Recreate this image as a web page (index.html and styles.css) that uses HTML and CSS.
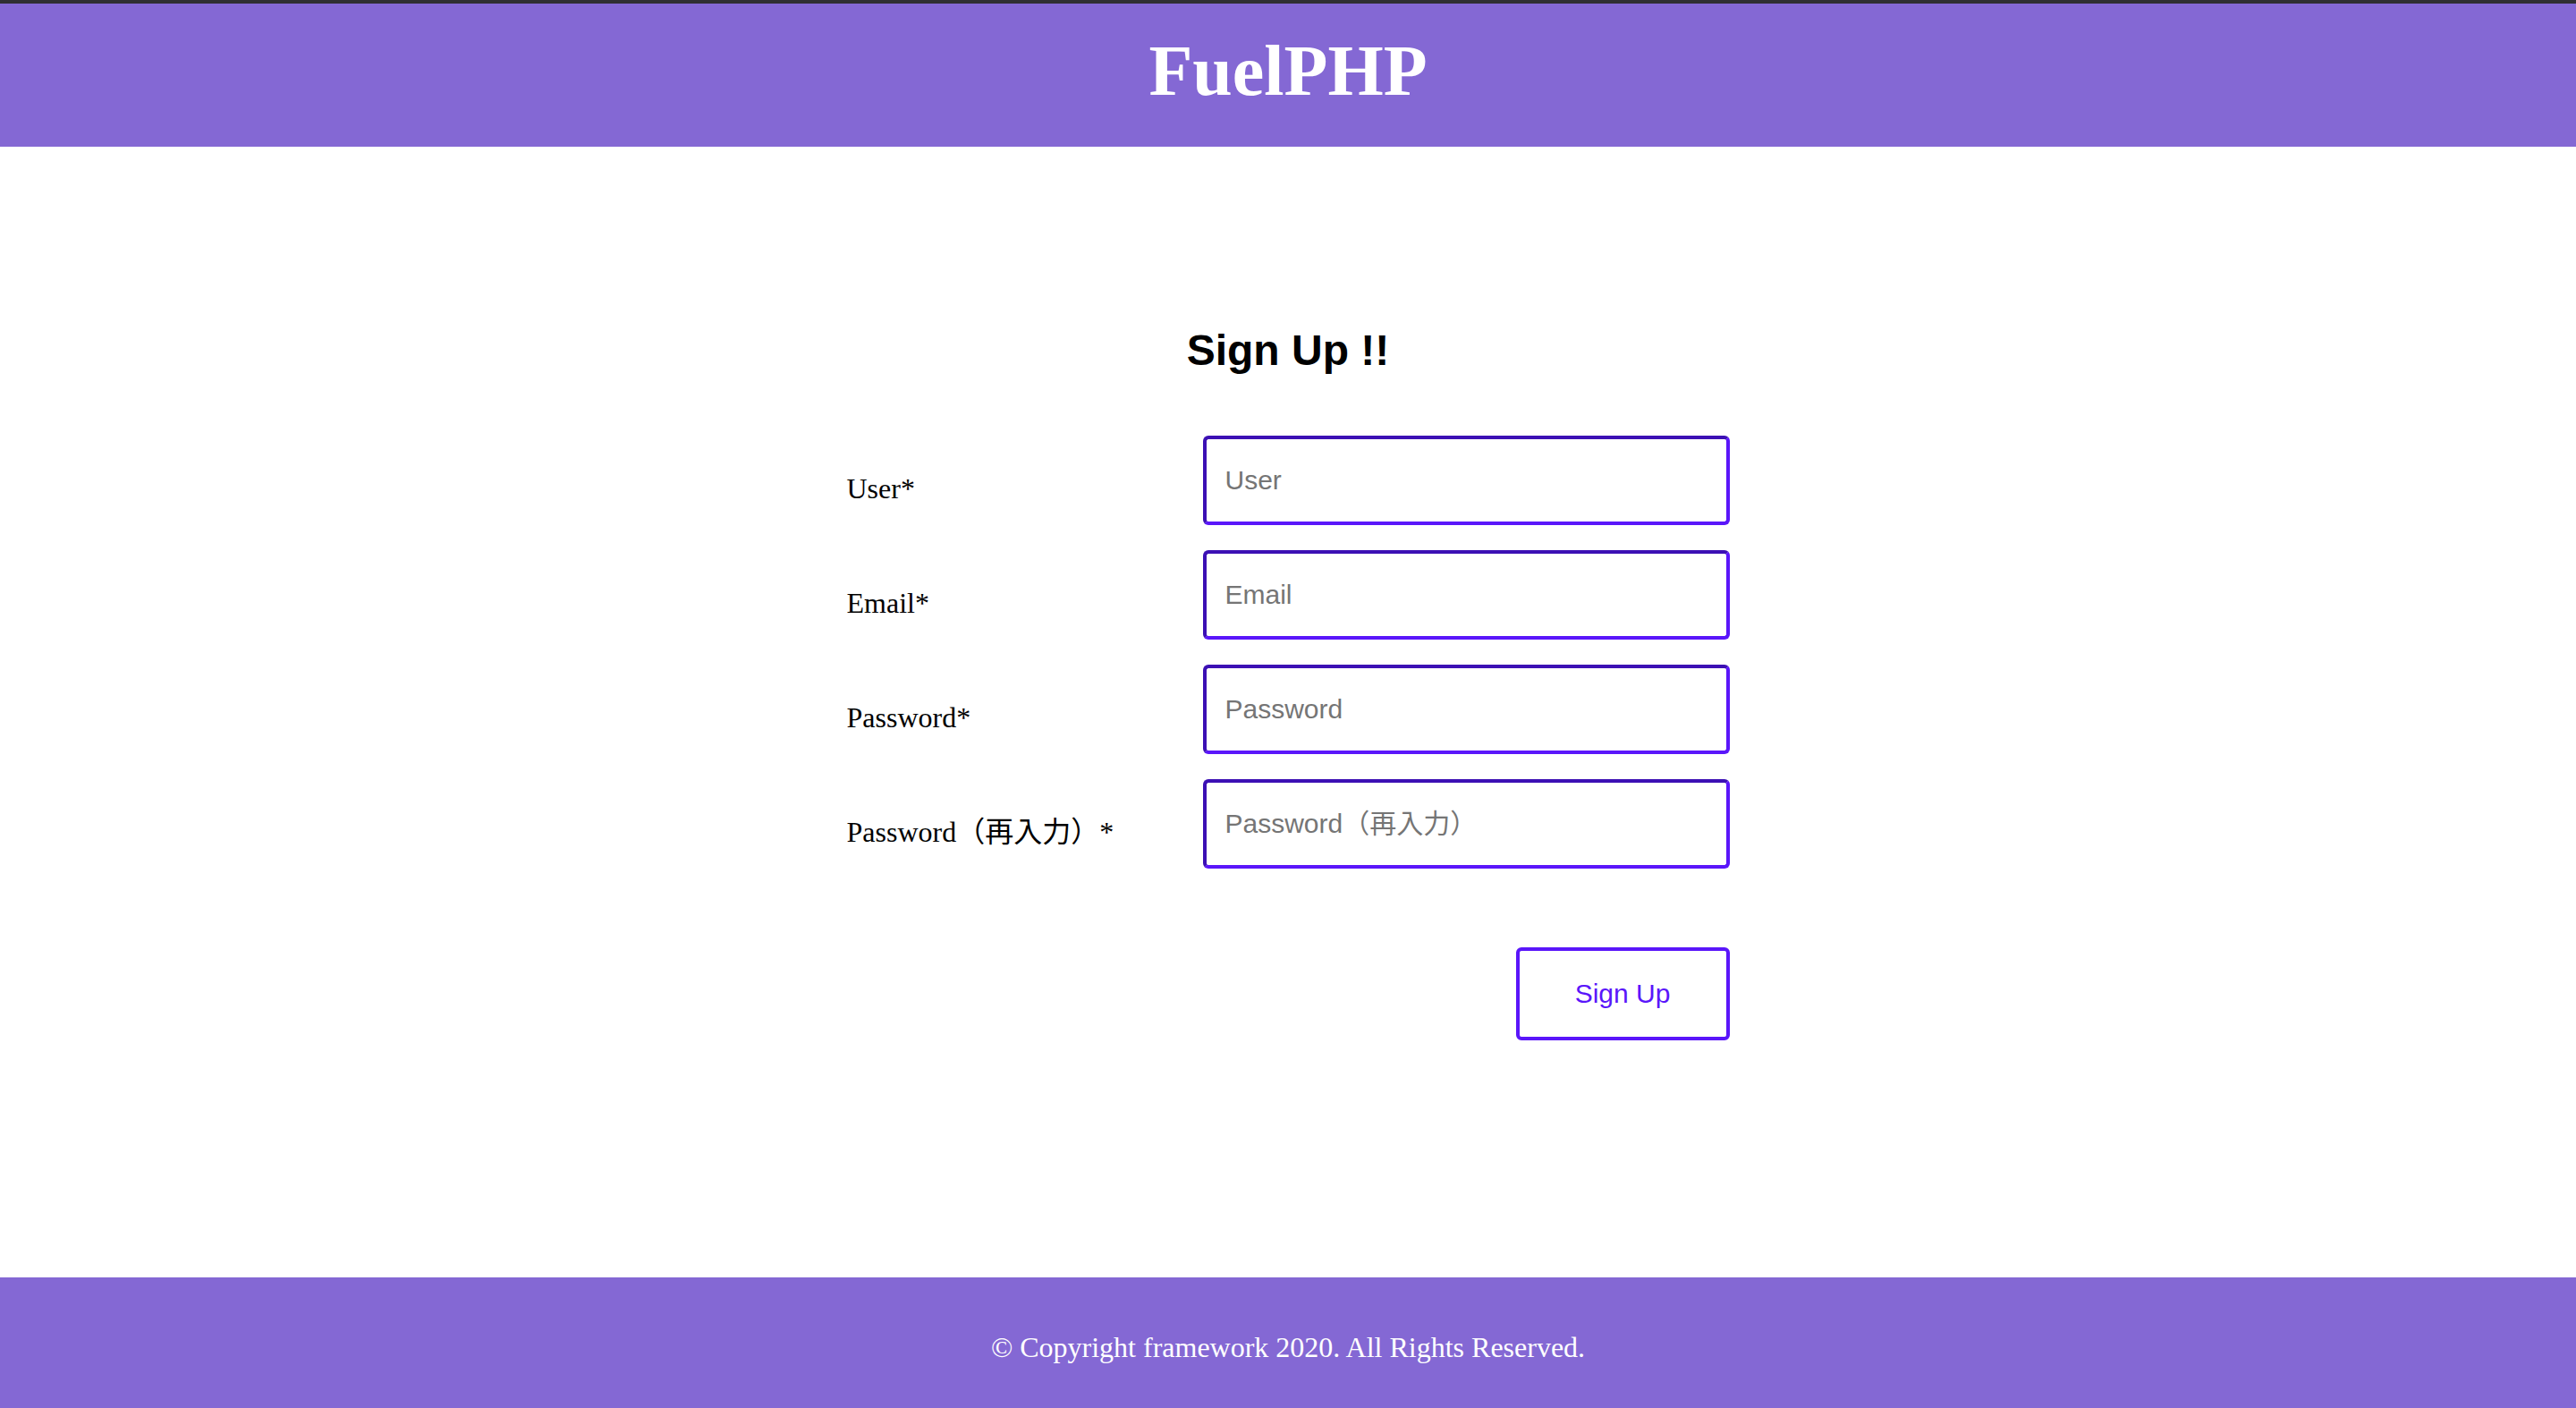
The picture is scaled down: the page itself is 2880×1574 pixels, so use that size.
FILE: index.html
```html
<!DOCTYPE html>
<html lang="ja">
<head>
<meta charset="utf-8">
<title>FuelPHP - Sign Up</title>
<link rel="stylesheet" href="styles.css">
</head>
<body>
<header class="site-header">
  <h1 class="logo">FuelPHP</h1>
</header>
<main class="content">
  <section class="signup">
    <h2 class="signup-title">Sign Up !!</h2>
    <form class="signup-form">
      <div class="field">
        <label class="field-label" for="user">User*</label>
        <input class="field-input" id="user" type="text" placeholder="User">
      </div>
      <div class="field">
        <label class="field-label" for="email">Email*</label>
        <input class="field-input" id="email" type="email" placeholder="Email">
      </div>
      <div class="field">
        <label class="field-label" for="password">Password*</label>
        <input class="field-input" id="password" type="password" placeholder="Password">
      </div>
      <div class="field">
        <label class="field-label" for="password2">Password（再入力）*</label>
        <input class="field-input" id="password2" type="password" placeholder="Password（再入力）">
      </div>
      <div class="actions">
        <button class="submit" type="submit">Sign Up</button>
      </div>
    </form>
  </section>
</main>
<footer class="site-footer">
  <p class="copyright">© Copyright framework 2020. All Rights Reserved.</p>
</footer>
</body>
</html>
```

FILE: styles.css
```css
html, body {
  margin: 0;
  padding: 0;
}

body {
  min-height: 100vh;
  display: flex;
  flex-direction: column;
  background: #ffffff;
  font-family: "Liberation Serif", "Noto Sans CJK JP", serif;
  color: #000000;
}

.site-header {
  background: #8468d4;
  border-top: 4px solid #2f2f33;
  height: 160px;
  box-sizing: content-box;
}

.logo {
  margin: 0;
  font-family: "Liberation Serif", serif;
  font-weight: bold;
  font-size: 80px;
  line-height: 150px;
  text-align: center;
  color: #ffffff;
}

.content {
  flex: 1;
  padding-top: 200px;
}

.signup-title {
  margin: 0;
  font-family: "Liberation Sans", Arial, sans-serif;
  font-weight: bold;
  font-size: 48px;
  line-height: 56px;
  text-align: center;
}

.signup-form {
  width: 987px;
  margin: 67px auto 0;
  display: flex;
  flex-direction: column;
  gap: 28px;
}

.field {
  display: grid;
  grid-template-columns: 398px 589px;
  height: 100px;
}

.field-label {
  padding-top: 41px;
  font-family: "Liberation Serif", "Noto Sans CJK JP", serif;
  font-size: 32px;
  line-height: 37px;
}

.field-input {
  box-sizing: border-box;
  width: 589px;
  height: 100px;
  margin: 0;
  padding: 0 21px;
  border: 4px solid;
  border-color: #3c10b4 #5a16fa #5a16fa #3c10b4;
  border-radius: 6px;
  background: #ffffff;
  font-family: "Liberation Sans", "Noto Sans CJK JP", sans-serif;
  font-size: 30px;
  color: #000000;
  outline: none;
}

.field-input::placeholder {
  color: #757575;
  opacity: 1;
}

.actions {
  display: flex;
  justify-content: flex-end;
  margin-top: 60px;
}

.submit {
  box-sizing: border-box;
  width: 239px;
  height: 104px;
  margin: 0;
  padding: 0;
  border: 4px solid #5a16fa;
  border-radius: 6px;
  background: #ffffff;
  color: #5a16fa;
  font-family: "Liberation Sans", sans-serif;
  font-size: 30px;
  cursor: pointer;
}

.site-footer {
  background: #8468d4;
  height: 146px;
  box-sizing: border-box;
  padding-top: 10px;
}

.copyright {
  margin: 0;
  font-family: "Liberation Serif", serif;
  font-size: 32px;
  line-height: 136px;
  text-align: center;
  color: #ffffff;
}
```
